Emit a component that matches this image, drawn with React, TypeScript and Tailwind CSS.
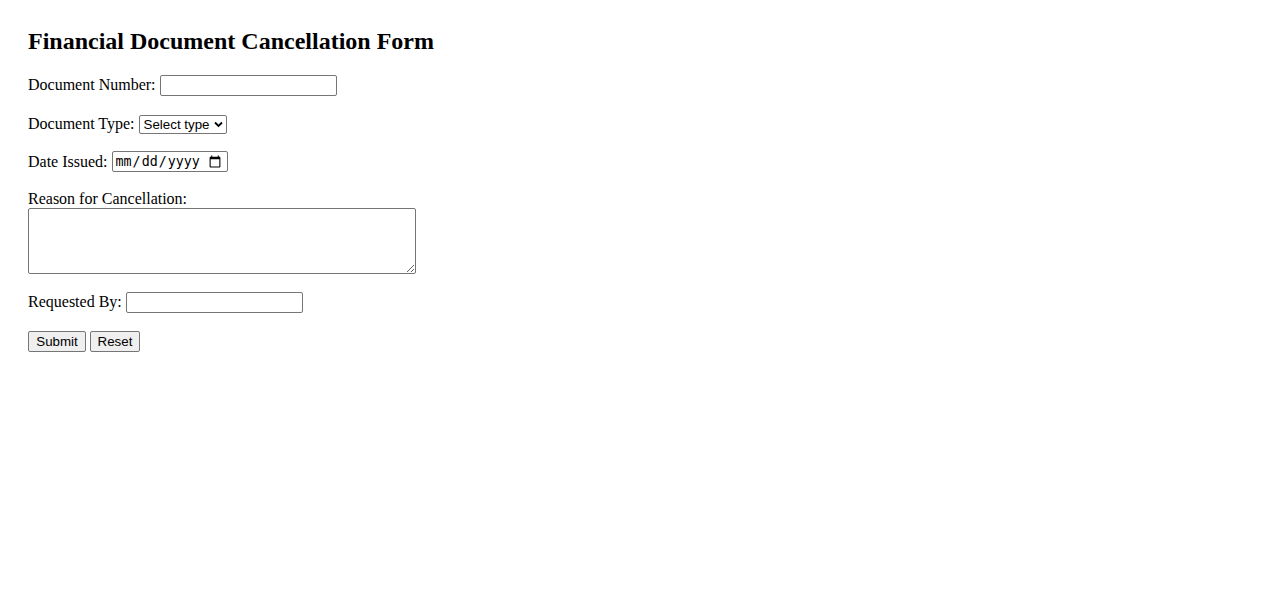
import React from "react";

export default function App() {
  const box = "border border-[#767676] rounded-[2px] bg-white text-black text-[13.333px] outline-none";
  const sans = "font-['Liberation_Sans',Arial,sans-serif]";
  return (
    <div className="min-h-screen bg-white text-black font-['Liberation_Serif','Times_New_Roman',serif] px-[28px] pt-[28px]">
      <h2 className="text-[24px] font-bold leading-[27px]">Financial Document Cancellation Form</h2>
      <form onSubmit={(e) => e.preventDefault()}>
        <div className="mt-[20px] flex items-center gap-[4px] h-[21px] text-[16px]">
          <label htmlFor="docnum" className="leading-[18px] mb-[2px]">Document Number:</label>
          <input id="docnum" type="text" className={`${box} ${sans} w-[177px] h-[21px] px-[2px]`} />
        </div>
        <div className="mt-[17px] flex items-center gap-[4px] h-[22px] text-[16px]">
          <label htmlFor="doctype" className="leading-[18px] mb-[1px]">Document Type:</label>
          <div className="relative">
            <select
              id="doctype"
              className={`${box} ${sans} block appearance-none w-[88px] h-[19px] pl-[4px] pr-[16px] leading-[17px]`}
              defaultValue=""
            >
              <option value="">Select type</option>
              <option value="invoice">Invoice</option>
              <option value="receipt">Receipt</option>
              <option value="credit">Credit Note</option>
            </select>
            <svg
              className="pointer-events-none absolute right-[4px] top-[6px]"
              width="9"
              height="7"
              viewBox="0 0 9 7"
            >
              <path d="M1 1.5 L4.5 5 L8 1.5" fill="none" stroke="#000" strokeWidth="1.8" />
            </svg>
          </div>
        </div>
        <div className="mt-[16px] flex items-center gap-[4px] h-[21px] text-[16px]">
          <label htmlFor="date" className="leading-[18px]">Date Issued:</label>
          <input
            id="date"
            type="date"
            className={`${box} w-[116px] h-[21px] pl-[2px] pr-[3px] font-['DejaVu_Sans_Mono',monospace]`}
          />
        </div>
        <div className="mt-[17px] text-[16px]">
          <label htmlFor="reason" className="block leading-[19px]">Reason for Cancellation:</label>
          <textarea id="reason" className={`${box} ${sans} block w-[388px] h-[66px] p-[2px]`} />
        </div>
        <div className="mt-[18px] flex items-center gap-[4px] h-[21px] text-[16px]">
          <label htmlFor="req" className="leading-[18px] mb-[2px]">Requested By:</label>
          <input id="req" type="text" className={`${box} ${sans} w-[177px] h-[21px] px-[2px]`} />
        </div>
        <div className="mt-[18px] flex items-center gap-[4px]">
          <button
            type="submit"
            className={`h-[21px] w-[58px] border border-[#767676] rounded-[2px] bg-[#efefef] text-black ${sans} text-[13.333px] leading-none`}
          >
            Submit
          </button>
          <button
            type="reset"
            className={`h-[21px] w-[50px] border border-[#767676] rounded-[2px] bg-[#efefef] text-black ${sans} text-[13.333px] leading-none`}
          >
            Reset
          </button>
        </div>
      </form>
    </div>
  );
}
